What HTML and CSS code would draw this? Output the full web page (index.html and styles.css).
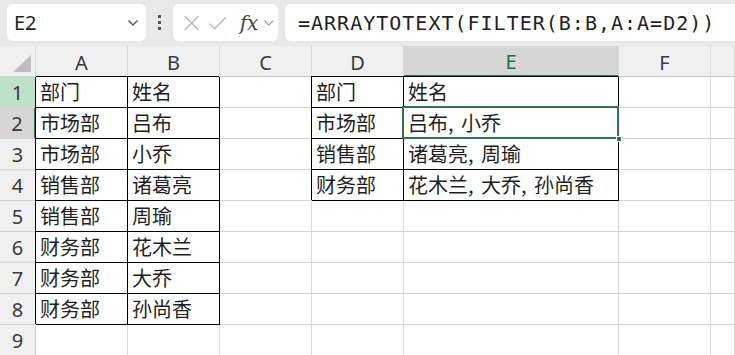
FILE: index.html
```html
<!DOCTYPE html>
<html lang="zh-CN">
<head>
    <meta charset="UTF-8">
    <title>ARRAYTOTEXT</title>
    <link rel="stylesheet" href="styles.css">
</head>
<body>
    <header class="toolbar">
        <div class="name-box">
            <span>E2</span>
            <svg class="chev" width="12" height="8" viewBox="0 0 12 8"><path d="M1.5 1.5 6 6l4.5-4.5" fill="none" stroke="#555" stroke-width="1.3"/></svg>
        </div>
        <div class="dots"><i></i><i></i><i></i></div>
        <div class="fx-box">
            <svg width="18" height="18" viewBox="0 0 18 18"><path d="M2 2l14 14M16 2 2 16" stroke="#b9b9b9" stroke-width="1.4"/></svg>
            <svg width="20" height="16" viewBox="0 0 20 16"><path d="M1.5 8.5 7 14 18.5 2" fill="none" stroke="#b9b9b9" stroke-width="1.4"/></svg>
            <span class="fx">fx</span>
            <svg class="chev" width="12" height="8" viewBox="0 0 12 8"><path d="M1.5 1.5 6 6l4.5-4.5" fill="none" stroke="#999" stroke-width="1.2"/></svg>
        </div>
        <div class="formula">=ARRAYTOTEXT(FILTER(B:B,A:A=D2))</div>
    </header>

    <main class="sheet">
        <div class="corner"><span class="tri"></span></div>
        <div class="col">A</div><div class="col">B</div><div class="col">C</div><div class="col">D</div>
        <div class="col col-on">E</div><div class="col">F</div><div class="col"></div>

        <div class="row row-hover">1</div>
        <div class="cell bd">部门</div><div class="cell bd">姓名</div><div class="cell"></div>
        <div class="cell bd">部门</div><div class="cell bd">姓名</div><div class="cell"></div><div class="cell"></div>

        <div class="row row-on">2</div>
        <div class="cell bd">市场部</div><div class="cell bd">吕布</div><div class="cell"></div>
        <div class="cell bd">市场部</div><div class="cell bd sel">吕布, 小乔<span class="handle"></span></div><div class="cell"></div><div class="cell"></div>

        <div class="row">3</div>
        <div class="cell bd">市场部</div><div class="cell bd">小乔</div><div class="cell"></div>
        <div class="cell bd">销售部</div><div class="cell bd">诸葛亮, 周瑜</div><div class="cell"></div><div class="cell"></div>

        <div class="row">4</div>
        <div class="cell bd">销售部</div><div class="cell bd">诸葛亮</div><div class="cell"></div>
        <div class="cell bd">财务部</div><div class="cell bd">花木兰, 大乔, 孙尚香</div><div class="cell"></div><div class="cell"></div>

        <div class="row">5</div>
        <div class="cell bd">销售部</div><div class="cell bd">周瑜</div><div class="cell"></div>
        <div class="cell"></div><div class="cell"></div><div class="cell"></div><div class="cell"></div>

        <div class="row">6</div>
        <div class="cell bd">财务部</div><div class="cell bd">花木兰</div><div class="cell"></div>
        <div class="cell"></div><div class="cell"></div><div class="cell"></div><div class="cell"></div>

        <div class="row">7</div>
        <div class="cell bd">财务部</div><div class="cell bd">大乔</div><div class="cell"></div>
        <div class="cell"></div><div class="cell"></div><div class="cell"></div><div class="cell"></div>

        <div class="row">8</div>
        <div class="cell bd">财务部</div><div class="cell bd">孙尚香</div><div class="cell"></div>
        <div class="cell"></div><div class="cell"></div><div class="cell"></div><div class="cell"></div>

        <div class="row">9</div>
        <div class="cell"></div><div class="cell"></div><div class="cell"></div>
        <div class="cell"></div><div class="cell"></div><div class="cell"></div><div class="cell"></div>
    </main>
</body>
</html>
```

FILE: styles.css
```css
* {
    box-sizing: border-box;
}
body {
    margin: 0;
    width: 735px;
    height: 355px;
    overflow: hidden;
    background: #fff;
    font-family: "Noto Sans", "Noto Sans CJK SC", sans-serif;
    color: #1f1f1f;
}
.toolbar {
    display: flex;
    align-items: center;
    height: 46px;
    padding: 4px 0 5px 7px;
    background: #e9e9e9;
    overflow: hidden;
}
.name-box, .fx-box, .formula {
    height: 37px;
    background: #fff;
    border-radius: 6px;
    display: flex;
    align-items: center;
}
.name-box {
    width: 139px;
    padding: 0 7px 0 7px;
    justify-content: space-between;
    font-size: 20px;
}
.dots {
    width: 27px;
    display: flex;
    flex-direction: column;
    align-items: center;
    gap: 3px;
}
.dots i {
    width: 3px;
    height: 3px;
    background: #555;
}
.fx-box {
    width: 105px;
    padding: 0 3px 0 10px;
    gap: 8px;
}
.fx {
    font-family: "DejaVu Serif", serif;
    font-style: italic;
    font-size: 20px;
    color: #444;
    margin-left: 4px;
}
.fx-box .chev {
    margin-left: -3px;
}
.formula {
    flex: 1;
    margin-left: 7px;
    margin-right: -10px;
    padding-left: 13px;
    font-family: "DejaVu Sans Mono", monospace;
    font-size: 20px;
    letter-spacing: 1px;
}
.sheet {
    display: grid;
    grid-template-columns: 36px 92px 92px 92px 92px 215px 92px 1fr;
    grid-template-rows: 31px;
    grid-auto-rows: 31px;
}
.corner, .col, .row, .cell {
    border-right: 1px solid #dadada;
    border-bottom: 1px solid #d2d2d2;
}
.corner {
    position: relative;
    background: #f0f0f0;
}
.tri {
    position: absolute;
    right: 4px;
    bottom: 4px;
    width: 0;
    height: 0;
    border-left: 18px solid transparent;
    border-bottom: 17px solid #bdbdbd;
}
.col, .row {
    background: #f0f0f0;
    color: #3a3a3a;
    display: flex;
    align-items: center;
    justify-content: center;
    font-size: 20px;
}
.col {
    padding-top: 2px;
    border-bottom-color: #c8c8c8;
}
.row {
    border-right-color: #c8c8c8;
}
.col-on {
    background: #d6d6d6;
    color: #2d6a4b;
    border-bottom: 2px solid #2f7551;
}
.row-hover {
    background: #bfe0c9;
}
.row-on {
    background: #d6d6d6;
    border-right: 2px solid #2f7551;
}
.cell {
    font-family: "Noto Sans CJK SC", sans-serif;
    font-size: 20px;
    line-height: 30px;
    padding-left: 4px;
    word-spacing: 3px;
    white-space: nowrap;
}
.bd {
    border-right-color: #000;
    border-bottom-color: #000;
    box-shadow: -1px -1px 0 #000;
}
.sel {
    position: relative;
}
.sel::after {
    content: "";
    position: absolute;
    top: -2px;
    left: -2px;
    right: -1px;
    bottom: -1px;
    border: 2px solid #2f7551;
}
.handle {
    position: absolute;
    right: -4px;
    bottom: -4px;
    width: 6px;
    height: 6px;
    background: #2f7551;
    border: 1px solid #fff;
    z-index: 1;
}
```
